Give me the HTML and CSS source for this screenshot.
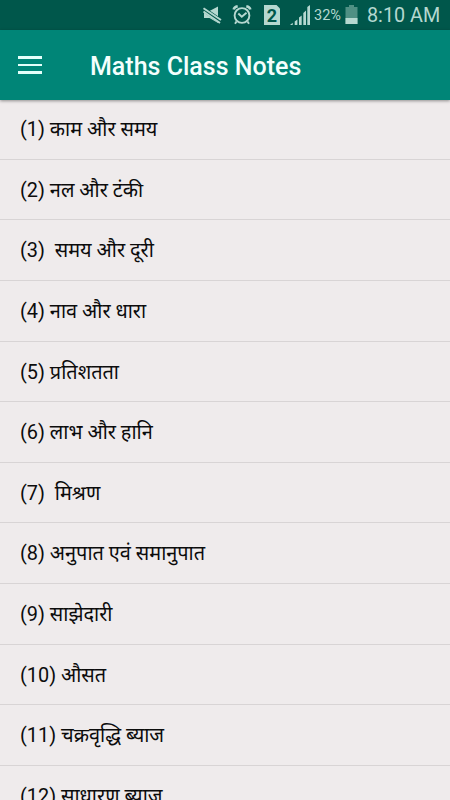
FILE: index.html
```html
<!DOCTYPE html>
<html lang="hi">
<head>
<meta charset="utf-8">
<title>Maths Class Notes</title>
<link rel="stylesheet" href="styles.css">
</head>
<body>
<div class="status">
  <svg class="mute" width="20" height="30" viewBox="0 0 20 30">
    <path class="fill" d="M2 11h5.500l8.500-4.500V23l-8.500-5H2z"/>
    <path class="cut" d="M0 8.300l20 13.800"/>
    <path class="line" d="M1.500 8.200l17.500 11.800M1.500 11.500l16.500 11.500"/>
  </svg>
  <svg class="alarm" width="22" height="30" viewBox="0 0 22 30">
    <circle class="line" cx="11" cy="15.500" r="7.400"/>
    <path class="line" d="M7.300 13.500l3.500 3.300 4.700-4M5.500 21.500l-1.500 2.300M16.500 21.500l1.500 2.300"/>
    <path class="bell" d="M2.700 9.500q.5-2.500 4-3.200M19.300 9.500q-.5-2.500-4-3.200"/>
  </svg>
  <svg class="sim" width="18" height="30" viewBox="0 0 18 30">
    <path class="fill" d="M1 5h12.500l3.500 3.500V25H1z"/>
    <text x="9" y="21.500">2</text>
  </svg>
  <svg class="signal" width="21" height="30" viewBox="0 0 21 30">
    <path class="fill" d="M0 25l2.700-2.200V25zM4.700 21.500l2.700-2V25H4.700zM9 17.500l2.700-2V25H9zM13.300 13L16 10.500V25h-2.700zM17.300 7L20 5v20h-2.700z"/>
  </svg>
  <span class="pct">32%</span>
  <svg class="battery" width="13" height="30" viewBox="0 0 13 30">
    <path class="empty" d="M4 5h5v2h3.500v17H0.500V7H4z"/>
    <path class="fill" d="M0.500 18h12v6h-12z"/>
  </svg>
  <span class="time">8:10 AM</span>
</div>
<header class="bar">
  <div class="menu"><i></i><i></i><i></i></div>
  <h1>Maths Class Notes</h1>
</header>
<ul class="list">
  <li>(1) काम और समय</li>
  <li>(2) नल और टंकी</li>
  <li>(3)&nbsp; समय और दूरी</li>
  <li>(4) नाव और धारा</li>
  <li>(5) प्रतिशतता</li>
  <li>(6) लाभ और हानि</li>
  <li>(7)&nbsp; मिश्रण</li>
  <li>(8) अनुपात एवं समानुपात</li>
  <li>(9) साझेदारी</li>
  <li>(10) औसत</li>
  <li>(11) चक्रवृद्धि ब्याज</li>
  <li>(12) साधारण ब्याज</li>
</ul>
</body>
</html>
```

FILE: styles.css
```css
body {
  margin: 0;
  height: 800px;
  overflow: hidden;
  background: #efebec;
  color: #0c0c0c;
  font-family: Roboto, "Noto Sans", sans-serif;
}
.status {
  height: 30px;
  box-sizing: border-box;
  padding-right: 11px;
  background: #00574b;
  color: #b5d8d0;
  display: flex;
  justify-content: flex-end;
  white-space: nowrap;
  line-height: 32px;
}
.status svg { flex: none; }
.fill { fill: #b5d8d0; }
.empty { fill: #4f9084; }
.line { fill: none; stroke: #b5d8d0; stroke-width: 1.9; }
.bell { fill: none; stroke: #b5d8d0; stroke-width: 2.6; }
.cut { stroke: #00574b; stroke-width: 5; }
.mute { margin-right: 9px; }
.alarm { margin-right: 10px; }
.sim { margin-right: 9px; }
.signal { margin-right: 3px; }
.sim text {
  fill: #00574b;
  font-size: 18px;
  font-weight: 700;
  text-anchor: middle;
}
.pct { width: 28px; margin-right: 3px; font-size: 14.5px; }
.time { width: 72px; margin-left: 9px; font-size: 19.8px; }
.bar {
  height: 70px;
  position: relative;
  background: #008577;
  box-shadow: 0 1px 3px rgba(0, 0, 0, .4);
  display: flex;
  align-items: center;
  color: #f4fffd;
}
.menu {
  width: 24px;
  margin: 0 48px 0 18px;
  display: grid;
  gap: 5px;
}
.menu i { height: 2.500px; background: #e4fffa; }
h1 {
  margin: 2px 0 0;
  font-size: 25px;
  font-weight: 500;
}
.list { list-style: none; margin: -0.8px 0 0; padding: 0; }
.list li {
  height: 60.6px;
  box-sizing: border-box;
  padding-left: 20px;
  line-height: 62.400px;
  font-size: 19.9px;
  border-bottom: 1px solid #d8d4d5;
}
```
